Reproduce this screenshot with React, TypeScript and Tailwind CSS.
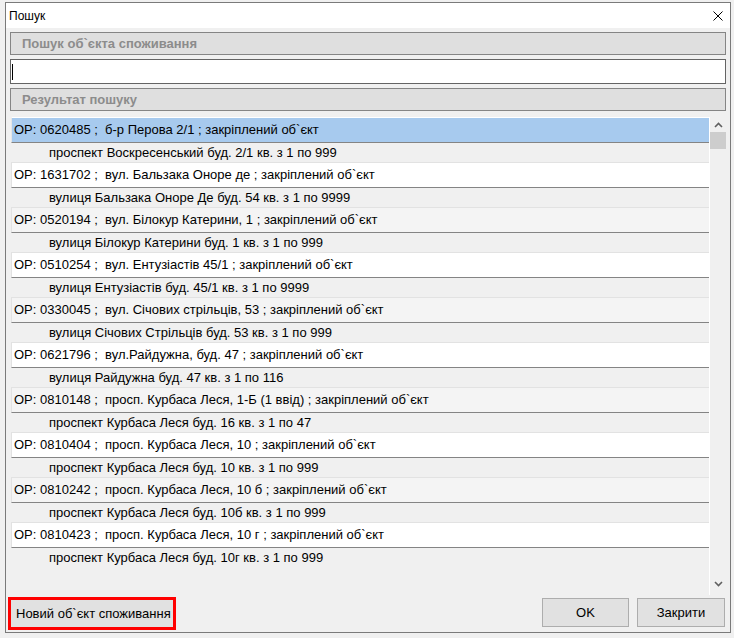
import React from 'react';

const results = [
  { code: '0620485', addr: 'б-р Перова 2/1', full: 'проспект Воскресенський буд. 2/1 кв. з 1 по 999' },
  { code: '1631702', addr: 'вул. Бальзака Оноре де', full: 'вулиця Бальзака Оноре Де буд. 54 кв. з 1 по 9999' },
  { code: '0520194', addr: 'вул. Білокур Катерини, 1', full: 'вулиця Білокур Катерини буд. 1 кв. з 1 по 999' },
  { code: '0510254', addr: 'вул. Ентузіастів 45/1', full: 'вулиця Ентузіастів буд. 45/1 кв. з 1 по 9999' },
  { code: '0330045', addr: 'вул. Січових стрільців, 53', full: 'вулиця Січових Стрільців буд. 53 кв. з 1 по 999' },
  { code: '0621796', addr: 'вул.Райдужна, буд. 47', full: 'вулиця Райдужна буд. 47 кв. з 1 по 116' },
  { code: '0810148', addr: 'просп. Курбаса Леся, 1-Б (1 ввід)', full: 'проспект Курбаса Леся буд. 16 кв. з 1 по 47' },
  { code: '0810404', addr: 'просп. Курбаса Леся, 10', full: 'проспект Курбаса Леся буд. 10 кв. з 1 по 999' },
  { code: '0810242', addr: 'просп. Курбаса Леся, 10 б', full: 'проспект Курбаса Леся буд. 10б кв. з 1 по 999' },
  { code: '0810423', addr: 'просп. Курбаса Леся, 10 г', full: 'проспект Курбаса Леся буд. 10г кв. з 1 по 999' },
];

function SectionHeader({ title }: { title: string }) {
  return (
    <div className="h-[23px] border border-[#858585] bg-[#dfdfdf] pl-[11px] flex items-center text-[13px] font-bold text-[#8c8c8c]">
      {title}
    </div>
  );
}

export default function App() {
  const selected = 0;

  return (
    <div className="w-[734px] h-[638px] overflow-hidden bg-[#f0f0f0] pt-[2px] pl-[5px] font-['Liberation_Sans',Arial,sans-serif] text-black">
      {/* Dialog window */}
      <div className="w-[726px] h-[631px] border border-[#7a7a7a] bg-[#f0f0f0] flex flex-col">
        {/* Title bar */}
        <div className="h-[25px] bg-white flex items-center justify-between pl-[3px] pr-[7px]">
          <span className="text-[12px]">Пошук</span>
          <svg width="10" height="10" viewBox="0 0 10 10" className="shrink-0">
            <path d="M0.5 0.5 L9.5 9.5 M9.5 0.5 L0.5 9.5" stroke="#000" strokeWidth="1" />
          </svg>
        </div>

        {/* Body */}
        <div className="flex flex-col px-[4px] pt-[4px]">
          <SectionHeader title="Пошук об`єкта споживання" />
          <div className="mt-[4px] h-[25px] border border-[#646464] bg-white flex items-center pl-[1px]">
            <div className="w-[1px] h-[16px] bg-black" />
          </div>
          <div className="mt-[4px]">
            <SectionHeader title="Результат пошуку" />
          </div>

          {/* Result list */}
          <div className="mt-[6px] ml-[1px] h-[478px] flex">
            <div className="flex-1 border-r border-white flex flex-col overflow-hidden">
              {results.map((r, i) => (
                <div key={r.code} className="flex flex-col">
                  <div
                    className={`h-[26px] border-t border-l border-b border-b-[#848484] flex items-center pl-[2px] text-[13px] whitespace-pre ${
                      i === selected
                        ? 'bg-[#a7caee] border-t-white border-l-[#e6e6e6]'
                        : i % 2 === 0
                        ? 'bg-[#f4f4f4] border-t-[#e2e2e2] border-l-[#e2e2e2]'
                        : 'bg-white border-t-[#e2e2e2] border-l-[#e2e2e2]'
                    }`}
                  >
                    {`OP: ${r.code} ;  ${r.addr} ; закріплений об\`єкт`}
                  </div>
                  <div className="h-[19px] flex items-center pl-[38px] text-[13px] whitespace-pre">{r.full}</div>
                </div>
              ))}
            </div>
            {/* Scrollbar */}
            <div className="w-[16px] bg-[#f0f0f0] flex flex-col items-center">
              <div className="h-[15px] w-full flex items-center justify-center">
                <svg width="9" height="6" viewBox="0 0 9 6">
                  <path d="M1 5 L4.5 1.5 L8 5" fill="none" stroke="#606060" strokeWidth="1.6" />
                </svg>
              </div>
              <div className="w-full h-[17px] bg-[#cdcdcd]" />
              <div className="flex-1" />
              <div className="h-[15px] w-full flex items-center justify-center mb-[4px]">
                <svg width="9" height="6" viewBox="0 0 9 6">
                  <path d="M1 1 L4.5 4.5 L8 1" fill="none" stroke="#606060" strokeWidth="1.6" />
                </svg>
              </div>
            </div>
          </div>
        </div>

        {/* Footer buttons */}
        <div className="mt-[2px] flex items-start pl-[2px] pr-[5px]">
          <div className="w-[168px] h-[33px] border-[3px] border-[#ff0000] bg-[#e1e1e1] flex items-center pl-[5px] text-[13px]">
            Новий об`єкт споживання
          </div>
          <div className="flex-1" />
          <div className="mt-[1px] w-[87px] h-[29px] border border-[#adadad] bg-[#e1e1e1] flex items-center justify-center text-[13px]">
            OK
          </div>
          <div className="ml-[8px] mt-[1px] w-[88px] h-[29px] border border-[#adadad] bg-[#e1e1e1] flex items-center justify-center text-[13px]">
            Закрити
          </div>
        </div>
      </div>
    </div>
  );
}
